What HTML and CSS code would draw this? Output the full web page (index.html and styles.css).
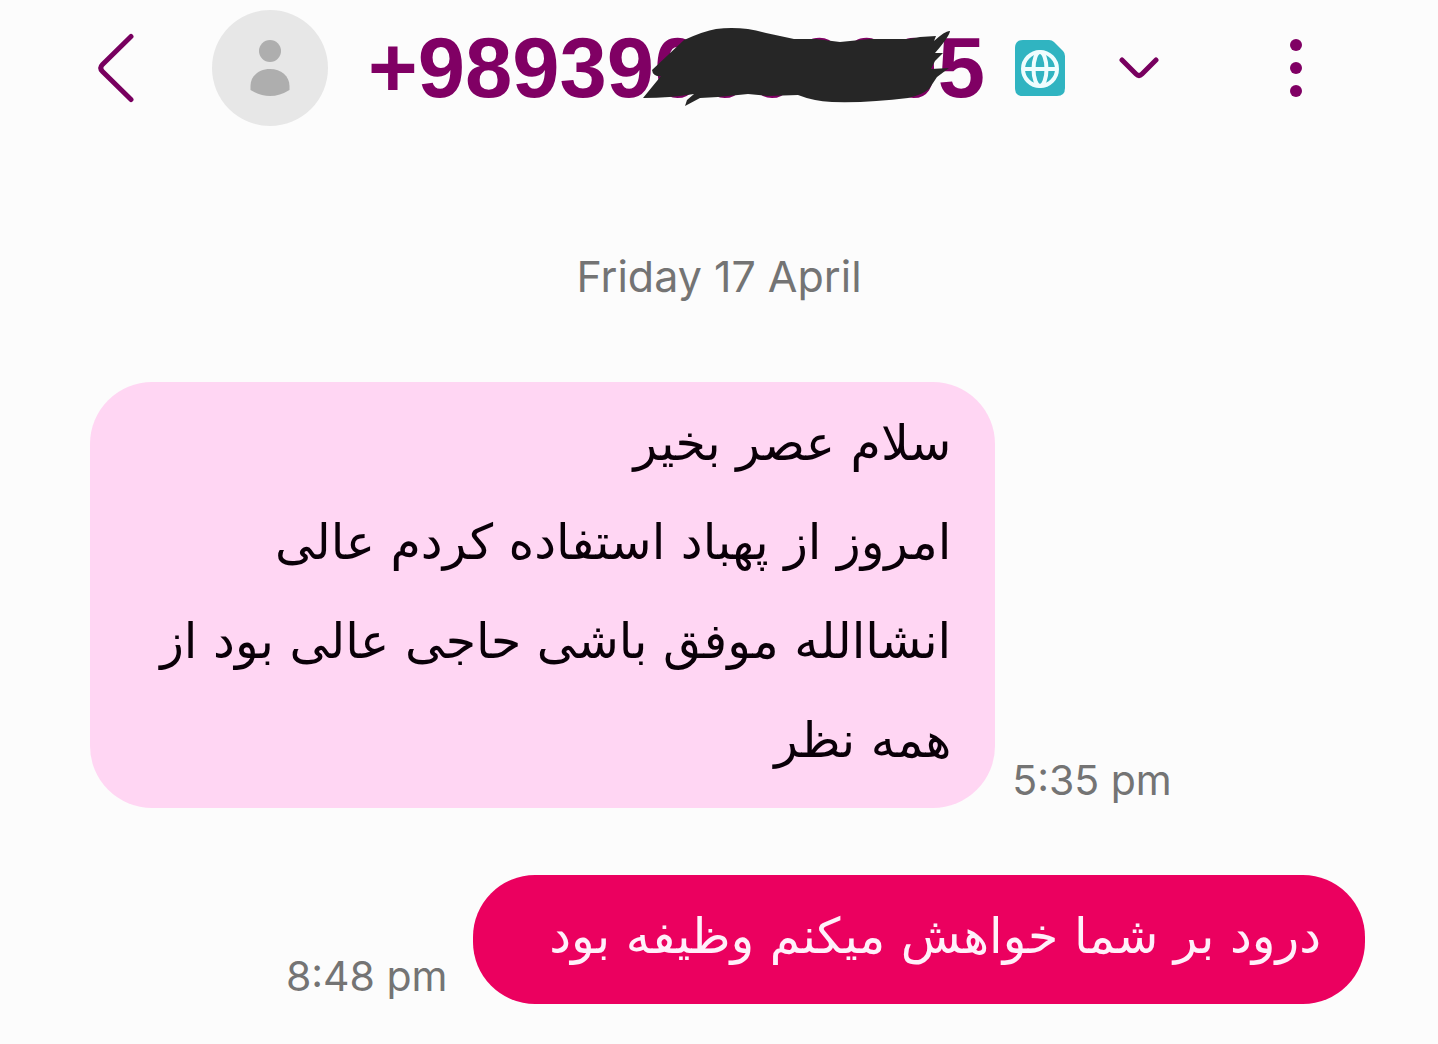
FILE: index.html
```
<!DOCTYPE html>
<html lang="fa">
<head>
  <meta charset="UTF-8">
  <meta name="viewport" content="width=device-width, initial-scale=1">
  <title>Messages</title>
  <link rel="stylesheet" href="styles.css">
</head>
<body>
  <header class="topbar">
    <button class="icon-btn back" aria-label="Back">
      <svg width="38" height="70" viewBox="0 0 38 70"><path d="M35 3.500 L6.500 31.500 Q3 35 6.500 38.500 L35 66.500"/></svg>
    </button>
    <svg class="avatar" width="116" height="116" viewBox="0 0 116 116">
      <circle cx="58" cy="58" r="58" fill="#e7e7e7"/>
      <circle cx="58" cy="41" r="11" fill="#aeaeae"/>
      <path d="M38.500 80 V76 C38.500 66 47 59 58 59 S77.500 66 77.500 76 V80 Q58 92 38.500 80 Z" fill="#aeaeae"/>
    </svg>
    <h1 class="number">
      +989390000005
      <svg class="scribble" width="310" height="80" viewBox="640 28 310 80" aria-hidden="true">
        <path d="M652 70 L684 40 Q704 31 716 29 Q742 26 766 33 L794 39 L816 39 L840 42 L870 39 L908 39 L920 37 L936 36 L934 41 Q946 30 950 31 Q949 37 935 53 L943 53 L935 61 L931 69 L949 68 L937 77 L929 89 Q922 95 908 98 Q870 103 832 102 Q813 101 798 95 L768 96 L748 94 L718 97 L700 98 L685 106 L687 100 L694 94 Q670 98 643 98 L661 76 Q653 77 652 70 Z"/>
      </svg>
    </h1>
    <svg class="sim" width="50" height="56" viewBox="0 0 50 56">
      <path d="M8 0 H34 Q37 0 39 2 L48 11 Q50 13 50 16 V48 Q50 56 42 56 H8 Q0 56 0 48 V8 Q0 0 8 0 Z" fill="#30b4c1"/>
      <g fill="none" stroke="#effdfe" stroke-width="4">
        <circle cx="25" cy="29" r="17"/>
        <ellipse cx="25" cy="29" rx="6.500" ry="17"/>
        <path class="equator" d="M8 29 H42"/>
      </g>
    </svg>
    <button class="icon-btn expand" aria-label="Show details">
      <svg width="40" height="24" viewBox="0 0 40 24"><path d="M3 4 L17 18 Q20 21 23 18 L37 4"/></svg>
    </button>
    <button class="icon-btn more" aria-label="More options">
      <svg width="12" height="60" viewBox="0 0 12 60"><circle cx="6" cy="7" r="6"/><circle cx="6" cy="30" r="6"/><circle cx="6" cy="53" r="6"/></svg>
    </button>
  </header>

  <main class="thread">
    <p class="date">Friday 17 April</p>

    <div class="message received">
      <p class="bubble" dir="rtl">سلام عصر بخیر<br>امروز از پهباد استفاده کردم عالی<br>انشاالله موفق باشی حاجی عالی بود از<br>همه نظر</p>
      <time class="time">5:35 pm</time>
    </div>

    <div class="message sent">
      <time class="time">8:48 pm</time>
      <p class="bubble" dir="rtl">درود بر شما خواهش میکنم وظیفه بود</p>
    </div>
  </main>
</body>
</html>
```
FILE: styles.css
```
:root {
  --bg: #fcfcfc;
  --accent: #800064;
  --muted: #747474;
  --received: #ffd6f3;
  --sent: #eb005f;
}

* {
  box-sizing: border-box;
}

body {
  margin: 0;
  background: var(--bg);
  font-family: Inter, sans-serif;
}

h1,
p {
  margin: 0;
}

.topbar {
  display: flex;
  align-items: center;
  padding: 10px 136px 10px 96px;
}

.icon-btn {
  display: flex;
  padding: 0;
  border: none;
  background: none;
  cursor: pointer;
}

.icon-btn path {
  fill: none;
  stroke: #78005f;
  stroke-width: 5;
  stroke-linecap: round;
}

.icon-btn circle {
  fill: var(--accent);
}

.avatar {
  flex: none;
  margin: 0 40px 0 78px;
}

.number {
  position: relative;
  color: var(--accent);
  font: 700 85px/96px "Liberation Sans", sans-serif;
  white-space: nowrap;
}

/* marker stroke drawn over the middle digits */
.scribble {
  position: absolute;
  left: 272px;
  top: 8px;
  fill: #262626;
}

.sim {
  flex: none;
  margin-left: 30px;
}

.expand {
  margin-left: 54px;
}

.more {
  margin-left: auto;
}

.thread {
  padding: 110px 73px 40px 90px;
}

.date {
  margin-right: 17px;
  color: var(--muted);
  font-size: 43px;
  line-height: 60px;
  text-align: center;
}

.message {
  display: flex;
  align-items: flex-end;
}

.received {
  gap: 17px;
  margin-top: 76px;
}

.sent {
  justify-content: flex-end;
  gap: 25px;
  margin-top: 67px;
}

.bubble {
  padding: 12px 44px 18px;
  border-radius: 62px;
  font: 49px/99px "DejaVu Sans", sans-serif;
}

.received .bubble {
  width: 71%;
  background: var(--received);
  color: #0a0008;
}

.sent .bubble {
  width: 70%;
  background: var(--sent);
  color: #fff0fa;
}

.time {
  color: var(--muted);
  font-size: 41px;
  line-height: 56px;
  white-space: nowrap;
}
```
